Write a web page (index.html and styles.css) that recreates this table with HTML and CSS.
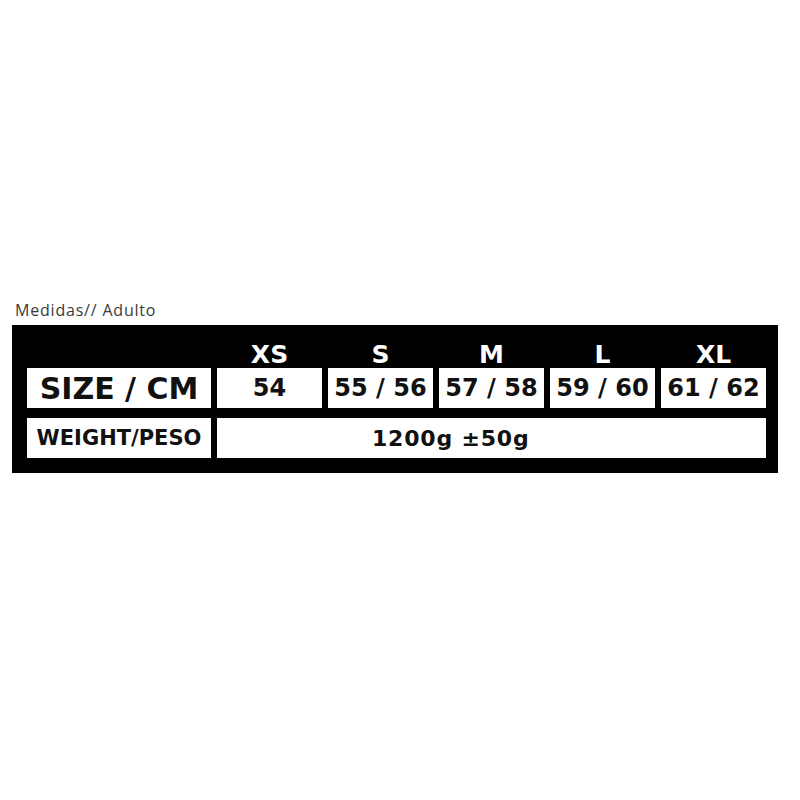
FILE: index.html
```html
<!DOCTYPE html>
<html>
<head>
<meta charset="utf-8">
<link rel="stylesheet" href="styles.css">
</head>
<body>
<div class="page">
  <div class="caption">Medidas// Adulto</div>
  <div class="chart">
    <div class="hdr-blank"></div>
    <div class="hdr">XS</div>
    <div class="hdr">S</div>
    <div class="hdr">M</div>
    <div class="hdr">L</div>
    <div class="hdr">XL</div>

    <div class="cell label-big">SIZE / CM</div>
    <div class="cell num">54</div>
    <div class="cell num">55 / 56</div>
    <div class="cell num">57 / 58</div>
    <div class="cell num">59 / 60</div>
    <div class="cell num">61 / 62</div>

    <div class="cell label-small row3">WEIGHT/PESO</div>
    <div class="cell weight row3">1200g ±50g</div>
  </div>
</div>
</body>
</html>
```

FILE: styles.css
```css
html, body {
  margin: 0;
  padding: 0;
  background: #ffffff;
}
.page {
  padding: 300px 0 0 12px;
}
.caption {
  font-family: "Open Sans", "Liberation Sans", sans-serif;
  font-size: 16px;
  line-height: 20px;
  letter-spacing: 0.8px;
  color: #3a3a3a;
  padding-left: 3px;
  height: 25px;
}
.chart {
  display: grid;
  width: 739px;
  grid-template-columns: 184px repeat(5, 105px);
  grid-template-rows: 43px 40px 50px;
  column-gap: 6px;
  background: #000000;
  padding: 0 12px 15px 15px;
  font-family: "DejaVu Sans", sans-serif;
  font-weight: bold;
}
.hdr {
  color: #ffffff;
  font-size: 25px;
  line-height: 25px;
  text-align: center;
  align-self: end;
  padding-bottom: 1px;
}
.cell {
  background: #ffffff;
  color: #111111;
  display: flex;
  align-items: center;
  justify-content: center;
}
.row3 {
  align-self: end;
  height: 40px;
}
.label-big {
  font-size: 30px;
}
.label-small {
  font-size: 21px;
}
.num {
  font-size: 24px;
}
.weight {
  grid-column: 2 / 7;
  justify-content: flex-start;
  padding-left: 155px;
  font-size: 22px;
  letter-spacing: 0.8px;
}
```
